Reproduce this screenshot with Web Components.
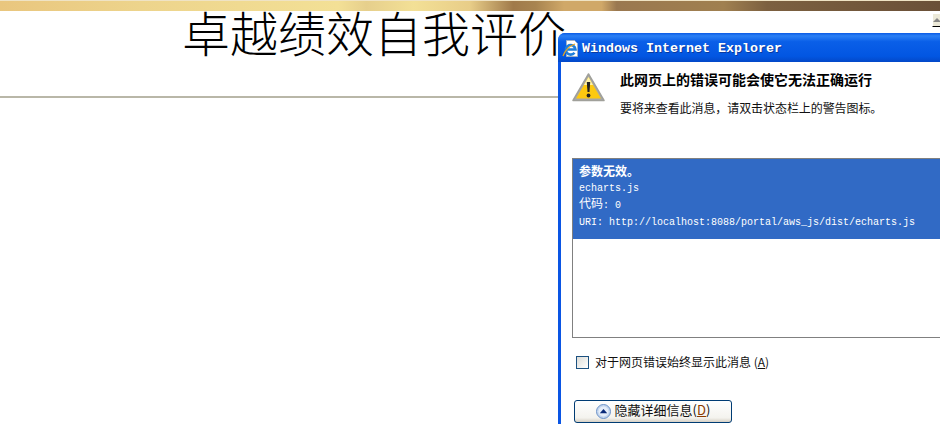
<!DOCTYPE html>
<html><head><meta charset="utf-8"><style>
html,body{margin:0;padding:0;width:940px;height:424px;overflow:hidden;background:#fff}
</style></head><body>
<page-shell></page-shell>
<script>
const CJK='"Noto Sans CJK SC","Liberation Sans",sans-serif';
class PageShell extends HTMLElement{constructor(){super();this.attachShadow({mode:'open'}).innerHTML=`<style>
:host{display:block;position:relative;width:940px;height:424px;overflow:hidden;font-family:${CJK}}
.banner{height:10px;border-top:1px solid #efe3c4;background:linear-gradient(90deg,#e9c67e 0,#edd48c 15%,#f3e096 36%,#e6cf8c 39%,#f3e096 44%,#e8cd88 50%,#a07a4a 54.6%,#a88450 57%,#d0a868 60%,#d0a868 64%,#9a7850 65.6%,#a08050 77%,#7c6040 81.600%,#6a5038 100%)}
.head{height:85px;border-bottom:2px solid #b9b7a8;display:flex;justify-content:center}
h1{margin:-5px 0 0 -192px;font-family:"Liberation Sans","Noto Sans CJK SC",sans-serif;font-size:48px;font-weight:300;line-height:60px;height:60px;color:#000;white-space:nowrap}
.sb{position:absolute;left:932px;top:13px;width:8px;height:14px;background:#ece9d8;border-top:1px solid #fff;border-left:1px solid #fff;box-sizing:border-box;border-bottom:1px solid #000}
.sb::after{content:"";position:absolute;left:0;top:4px;border:4px solid transparent;border-top:0;border-bottom-color:#888}
ie-dialog{position:absolute;left:558px;top:33px}
</style><div class="banner"></div><div class="head"><h1>卓越绩效自我评价</h1></div><div class="sb"></div><ie-dialog></ie-dialog>`}}
class IeDialog extends HTMLElement{constructor(){super();this.attachShadow({mode:'open'}).innerHTML=`<style>
:host{display:block;width:400px;height:420px;font-family:${CJK};color:#000}
.win{width:100%;height:100%;box-sizing:border-box;border-radius:7px 0 0 0;background:#0a55e4;padding:0 0 0 3px;display:flex;flex-direction:column}
.title{height:29px;margin-left:-3px;border-radius:7px 0 0 0;background:linear-gradient(180deg,#0a5be6 0,#2b80f5 10%,#0a5fe8 30%,#0256e2 80%,#0348c8 100%);display:flex;align-items:center;gap:1px;padding:2px 0 0 3px;box-sizing:border-box;flex:none}
.title svg{flex:none}
.title b{font:bold 13.33px "Liberation Mono",monospace;color:#fff;text-shadow:1px 1px 0 #0a3aa0;white-space:nowrap}
.body{flex:1;background:#fff;padding:0 0 0 11px;display:flex;flex-direction:column}
.top{display:flex;height:67px;flex:none}
.warn{width:48px;padding-top:11px;flex:none}
.h{font-size:14px;font-weight:700;line-height:18px;margin-top:8px;color:#000;white-space:nowrap}
.s{font-size:12px;line-height:18px;margin-top:11px;color:#111;white-space:nowrap;letter-spacing:-.08px}
.box{width:420px;height:180px;box-sizing:border-box;border:1px solid #808080;margin-top:29px;flex:none}
.sel{height:80px;background:#316ac5;color:#fff;padding:3px 6px;box-sizing:border-box}
.sel div{font:10px/17px "Liberation Mono",${CJK};height:17px;white-space:nowrap}
.sel .e{font:700 12px/18px ${CJK};height:18px}
.sel i{font:normal 12px/17px "Liberation Mono",${CJK}}
.chk{display:flex;align-items:center;gap:6px;margin:15px 0 0 4px;font-size:12px;line-height:18px;color:#111;flex:none}
.cb{width:13px;height:13px;box-sizing:border-box;border:1px solid #1c5180;background:linear-gradient(135deg,#dcdcd7,#fff)}
u{text-decoration:underline}
.btn{margin:29px 0 0 2px;width:158px;height:23px;box-sizing:border-box;border:1px solid #003c74;border-radius:3px;background:linear-gradient(180deg,#fff,#f4f3ee 80%,#d6d0c5);display:flex;align-items:center;justify-content:center;gap:4px;font-size:13px;line-height:17px;color:#111;flex:none}
.btn span{margin-top:-4px}
.btn .d{color:#8a3a00}
</style><div class="win"><div class="title">
<svg width="20" height="20" viewBox="0 0 20 20"><path d="M5.500 1.500h8l3 3v13h-11z" fill="#fff" stroke="#9db0c8"/><path d="M5 10.500h9.500a4.800 4.800 0 1 0-1 3.300" fill="none" stroke="#1f7fdc" stroke-width="2.600"/><path d="M2 17c2-6 7-10 12-12" fill="none" stroke="#e9a51c" stroke-width="1.200"/></svg>
<b>Windows Internet Explorer</b></div>
<div class="body"><div class="top"><div class="warn"><svg width="34" height="30" viewBox="0 0 34 30"><path d="M16.500 1 L32 27.500 H1 Z" fill="#a9a9a9" stroke="#a0a09a" stroke-linejoin="round" stroke-width="1.500"/><path d="M16.500 4 L29 25.500 H4 Z" fill="#fdc90f"/><path d="M16.500 4 L21 12 H12 Z" fill="#fff3a8"/><path d="M14.800 9h3.400l-.7 10h-2z" fill="#222"/><circle cx="16.500" cy="22.500" r="1.900" fill="#222"/></svg></div>
<div><div class="h">此网页上的错误可能会使它无法正确运行</div><div class="s">要将来查看此消息，请双击状态栏上的警告图标。</div></div></div>
<div class="box"><div class="sel"><div class="e">参数无效。</div><div>echarts.js</div><div><i>代码</i>: 0</div><div>URI: http://localhost:8088/portal/aws_js/dist/echarts.js</div></div></div>
<div class="chk"><span class="cb"></span><span>对于网页错误始终显示此消息 (<u>A</u>)</span></div>
<div class="btn"><svg width="15" height="15" viewBox="0 0 15 15"><circle cx="7.500" cy="7.500" r="7" fill="#c4d6ee" stroke="#6e93c8"/><circle cx="7.500" cy="7.500" r="5" fill="#e6eef9"/><path d="M3.800 9.300 7.500 5l3.700 4.300z" fill="#0a2a78"/></svg><span>隐藏详细信息(<u class="d">D</u>)</span></div>
</div></div>`}}
customElements.define('ie-dialog',IeDialog);
customElements.define('page-shell',PageShell);
</script></body></html>
